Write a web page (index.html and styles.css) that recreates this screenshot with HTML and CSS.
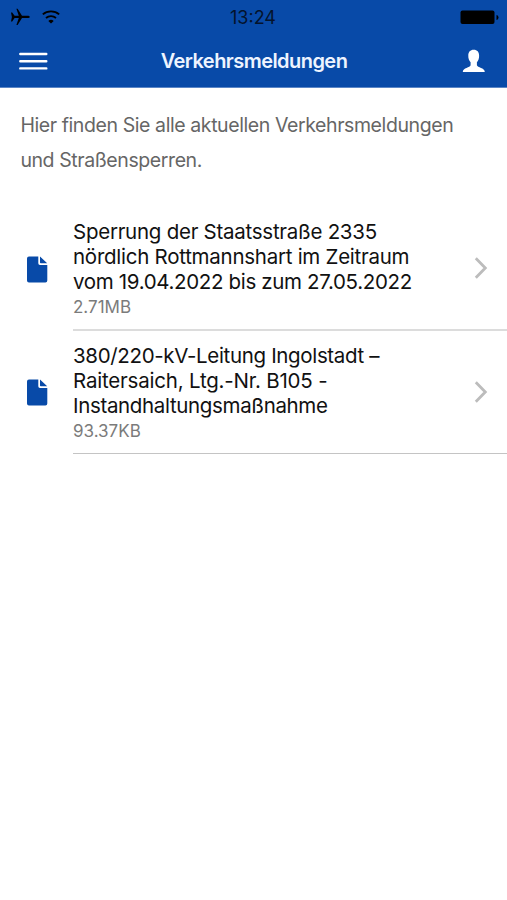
FILE: index.html
```html
<!DOCTYPE html>
<html lang="de">
<head>
<meta charset="utf-8">
<meta name="viewport" content="width=device-width, initial-scale=1">
<title>Verkehrsmeldungen</title>
<link rel="stylesheet" href="styles.css">
</head>
<body>
<header class="header">
  <div class="status">
    <div class="status-left">
      <svg class="plane" width="20" height="18" viewBox="0 0 20 18"><path d="M1 4.4H2.2L4.6 7.8H8.8L6.4 0.8H7.6L12 7.8H17.5C18.8 7.8 19.8 8.2 19.8 8.9S18.8 10 17.5 10H12L7.6 17H6.4L8.8 10H4.6L2.2 13.4H1L1.9 8.9Z"/></svg>
      <svg class="wifi" width="18" height="14" viewBox="0 0 18 14"><path d="M.8 4.4C5.3 .3 12.7 .3 17.2 4.4M4 8C6.9 5.4 11.1 5.4 14 8" fill="none" stroke="#000" stroke-width="1.8"/><path d="M9 13.4L6.3 10.9Q9 8.6 11.7 10.9Z"/></svg>
    </div>
    <time class="clock">13:24</time>
    <svg class="battery" width="39" height="15" viewBox="0 0 39 15"><rect x=".5" y=".5" width="34" height="13.5" rx="2"/><path d="M36.5 5Q38.5 5.4 38.5 7.5T36.5 10Z"/></svg>
  </div>
  <nav class="bar">
    <svg class="menu" width="29" height="19" viewBox="0 0 29 19"><path d="M1.3 2H27.3M1.3 9.2H27.3M1.3 16.4H27.3" stroke="#fff" stroke-width="2.4" stroke-linecap="round"/></svg>
    <h1 class="title">Verkehrsmeldungen</h1>
    <svg class="user" width="24" height="24" viewBox="0 0 24 24"><path d="M11.7.7C15.2.7 17.2 3 17.1 6.6C17.3 9.6 16.2 11.8 14.9 13.2V16.2C15.4 18.8 22.8 18.4 22.8 23H.8C.8 18.4 8.2 18.8 8.6 16.2V13.2C7.3 11.8 6.1 9.6 6.3 6.6C6.2 3 8.2.7 11.7.7Z" fill="#fff"/></svg>
  </nav>
</header>
<main>
  <p class="intro">Hier finden Sie alle aktuellen Verkehrsmeldungen<br>und Straßensperren.</p>
  <ul class="list">
    <li class="item">
      <svg class="file" width="21" height="27" viewBox="0 0 21 27"><path d="M2 .5H11.3V7.3Q11.3 9 13 9H20.3V24.6Q20.3 26.5 18.4 26.5H2Q0 26.5 0 24.5V2.5Q0 .5 2 .5ZM13 .6L20.2 7.2H13.8Q13 7.2 13 6.4Z"/></svg>
      <div class="body">
        <div class="text">
          <h2 class="name">Sperrung der Staatsstraße 2335<br>nördlich Rottmannshart im Zeitraum<br><span class="tight">vom 19.04.2022 bis zum 27.05.2022</span></h2>
          <p class="size">2.71MB</p>
        </div>
        <svg class="chevron" width="14" height="24" viewBox="0 0 14 24"><path d="M1.8 2.3L11.3 12L1.8 21.7"/></svg>
      </div>
    </li>
    <li class="item item-last">
      <svg class="file" width="21" height="27" viewBox="0 0 21 27"><path d="M2 .5H11.3V7.3Q11.3 9 13 9H20.3V24.6Q20.3 26.5 18.4 26.5H2Q0 26.5 0 24.5V2.5Q0 .5 2 .5ZM13 .6L20.2 7.2H13.8Q13 7.2 13 6.4Z"/></svg>
      <div class="body">
        <div class="text">
          <h2 class="name"><span class="tight">380/220-kV-Leitung Ingolstadt –</span><br><span class="loose">Raitersaich, Ltg.-Nr. B105 -</span><br><span class="tight">Instandhaltungsmaßnahme</span></h2>
          <p class="size">93.37KB</p>
        </div>
        <svg class="chevron" width="14" height="24" viewBox="0 0 14 24"><path d="M1.8 2.3L11.3 12L1.8 21.7"/></svg>
      </div>
    </li>
  </ul>
</main>
</body>
</html>
```
FILE: styles.css
```css
* { box-sizing: border-box; margin: 0; padding: 0; }
body { background: #fff; font-family: Inter, "Liberation Sans", sans-serif; color: #111; }
svg { display: block; flex: none; }
.header { height: 88px; background: #084aa8; border-bottom: 1px solid #5b86c6; }
.status { height: 35px; display: grid; grid-template-columns: 1fr auto 1fr; align-items: center; padding: 0 8px 0 10px; }
.status-left { display: flex; align-items: center; gap: 12px; padding-bottom: 2px; }
.clock { font-size: 18px; line-height: 22px; color: #04132c; padding-right: 3px; }
.battery { justify-self: end; }
.bar { height: 52px; display: grid; grid-template-columns: 1fr auto 1fr; align-items: center; padding: 0 21px 0 19px; }
.title { font-size: 20px; line-height: 26px; font-weight: 600; letter-spacing: -0.55px; color: #eef4ff; padding-left: 3px; }
.user { justify-self: end; }
.intro { padding: 20px 0 0 20.4px; font-size: 19.5px; line-height: 35px; letter-spacing: -0.41px; color: #666; }
.list { list-style: none; padding-top: 29px; }
.item { display: flex; align-items: center; height: 124px; padding-left: 27px; }
.item-last { height: 123px; }
.file { fill: #084aa8; margin-right: 25px; }
.body { flex: 1; height: 100%; display: flex; align-items: center; justify-content: space-between; border-bottom: 2px solid #dcdcdc; padding-right: 19px; }
.item-last .body { border-bottom: 1px solid #c4c4c4; }
.text { padding-top: 3px; }
.name { font-size: 20.5px; line-height: 25px; font-weight: 400; letter-spacing: -0.26px; }
.tight { letter-spacing: -0.34px; }
.loose { letter-spacing: -0.2px; }
.size { font-size: 17px; line-height: 27px; color: #7b7b7b; }
.chevron path { fill: none; stroke: #bcbcbc; stroke-width: 2.8; }
```
